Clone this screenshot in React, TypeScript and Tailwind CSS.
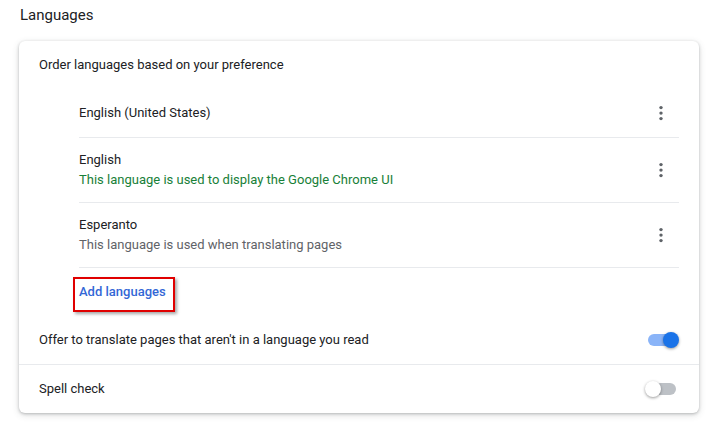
import React from 'react';

interface LanguageRowProps {
  name: string;
  note?: string;
  noteClass?: string;
}

const MoreIcon: React.FC = () => (
  <svg width="20" height="20" viewBox="0 0 20 20" className="text-[#5f6368]" fill="currentColor">
    <circle cx="10" cy="4.6" r="1.7" />
    <circle cx="10" cy="10.1" r="1.7" />
    <circle cx="10" cy="15.6" r="1.7" />
  </svg>
);

const LanguageRow: React.FC<LanguageRowProps> = ({ name, note, noteClass }) => (
  <div
    className={`flex items-center justify-between border-b border-[#e8eaed] ${
      note ? 'h-[65px]' : 'h-[50px]'
    }`}
  >
    <div className="flex flex-col leading-[20px]">
      <span className="text-[#202124]">{name}</span>
      {note && <span className={noteClass}>{note}</span>}
    </div>
    <div className="w-[36px] flex justify-center">
      <MoreIcon />
    </div>
  </div>
);

const Toggle: React.FC<{ on: boolean }> = ({ on }) => (
  <div className="relative w-[34px] h-[16px] flex items-center">
    <div
      className={`ml-[3px] w-[28px] h-[12px] rounded-full ${on ? 'bg-[#8ab4f8]' : 'bg-[#bdc1c6]'}`}
    />
    <div
      className={`absolute top-0 w-[16px] h-[16px] rounded-full shadow-[0_1px_3px_rgba(0,0,0,0.4)] ${
        on ? 'left-[18px] bg-[#1a73e8]' : 'left-0 bg-white'
      }`}
    />
  </div>
);

export default function App() {
  return (
    <div
      className="w-[724px] h-[427px] bg-white text-[13px] text-[#202124]"
      style={{ fontFamily: 'Roboto, "Liberation Sans", sans-serif' }}
    >
      <div className="h-[41px] pl-[20px] pt-[5px] text-[15px] leading-[20px] text-[#202124]">
        Languages
      </div>

      {/* Card */}
      <div className="ml-[19px] w-[680px] rounded-[6px] bg-white shadow-[0_1px_3px_rgba(60,64,67,0.3),0_2px_6px_1px_rgba(60,64,67,0.12)]">
        <div className="h-[47px] pl-[20px] flex items-center">
          Order languages based on your preference
        </div>

        <div className="ml-[60px] mr-[20px]">
          <LanguageRow name="English (United States)" />
          <LanguageRow
            name="English"
            note="This language is used to display the Google Chrome UI"
            noteClass="text-[#188038]"
          />
          <LanguageRow
            name="Esperanto"
            note="This language is used when translating pages"
            noteClass="text-[#5f6368]"
          />
          <div className="h-[48px] flex items-center">
            <span className="relative font-medium text-[#3367d6]">
              Add languages
              <span className="absolute -left-[6px] -right-[9px] -top-[5px] -bottom-[10px] border-2 border-[#e00000] shadow-[2px_2px_3px_rgba(0,0,0,0.35)]" />
            </span>
          </div>
        </div>

        <div className="h-[49px] pl-[20px] pr-[20px] flex items-center justify-between border-b border-[#e8eaed]">
          <span>Offer to translate pages that aren't in a language you read</span>
          <Toggle on />
        </div>
        <div className="h-[48px] pl-[20px] pr-[20px] flex items-center justify-between">
          <span>Spell check</span>
          <Toggle on={false} />
        </div>
      </div>
    </div>
  );
}
